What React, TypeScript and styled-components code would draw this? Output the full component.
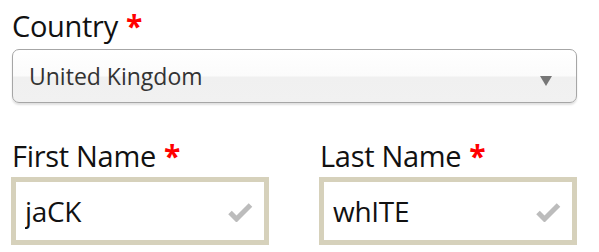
import React from "react";
import styled, { createGlobalStyle } from "styled-components";

const GlobalStyle = createGlobalStyle`
    html, body {
        margin: 0;
        padding: 0;
        background: #fff;
    }
    body {
        font-family: "Open Sans", "Noto Sans", sans-serif;
        color: #111;
    }
`;

const Form = styled.form`
    width: 566px;
    padding: 8px 0 0 11px;
`;

const Field = styled.div`
    display: flex;
    flex-direction: column;
`;

const Label = styled.label<{ $gap: number }>`
    display: block;
    font-size: 29px;
    line-height: 36px;
    padding-left: 1px;
    margin-bottom: ${p => p.$gap}px;
    color: #111;
    letter-spacing: -0.3px;
`;

const Required = styled.span`
    color: #f00;
    font-weight: 700;
    font-size: 30px;
    margin-left: 8px;
`;

const SelectWrap = styled.div`
    position: relative;
    margin-left: 1px;
`;

const Select = styled.select`
    appearance: none;
    -webkit-appearance: none;
    display: block;
    width: 565px;
    height: 54px;
    box-sizing: border-box;
    padding: 0 40px 0 16px;
    font-family: inherit;
    font-size: 23px;
    color: #333;
    border: 1.5px solid #a6a6a6;
    border-radius: 7px;
    background: linear-gradient(#ffffff 0%, #fbfbfb 50%, #f0f0f0 52%, #f1f1f1 100%);
    box-shadow: 0 2px 2px rgba(0, 0, 0, 0.12);
    outline: none;
`;

const Arrow = styled.span`
    position: absolute;
    right: 25px;
    top: 27px;
    width: 0;
    height: 0;
    border-left: 6px solid transparent;
    border-right: 6px solid transparent;
    border-top: 10px solid #777;
    pointer-events: none;
`;

const Row = styled.div`
    display: grid;
    grid-template-columns: 258px 258px;
    column-gap: 50px;
    margin-top: 35px;
`;

const InputWrap = styled.div`
    position: relative;
`;

const TextInput = styled.input`
    display: block;
    width: 258px;
    height: 68px;
    box-sizing: border-box;
    border: 5px solid #d6d1bb;
    padding: 0 48px 0 9px;
    font-family: inherit;
    font-size: 28px;
    color: #111;
    background: #fff;
    outline: none;
    border-radius: 0;
    letter-spacing: -0.3px;
`;

const CheckMark = styled.svg`
    position: absolute;
    right: 16px;
    top: 25px;
    width: 25px;
    height: 20px;
    pointer-events: none;
`;

function Check() {
    return <CheckMark viewBox="0 0 25 20">
        <path d="M2 10.5 L8.5 17 L22.5 3" fill="none" stroke="#bcbcbc" strokeWidth="5" strokeLinejoin="miter" strokeLinecap="butt" />
    </CheckMark>;
}

function NameField(prop: { label: string, value: string }) {
    return <Field>
        <Label $gap={3}>{prop.label}<Required>*</Required></Label>
        <InputWrap>
            <TextInput value={prop.value} readOnly />
            <Check />
        </InputWrap>
    </Field>;
}

export default function App() {
    return <>
        <GlobalStyle />
        <Form onSubmit={e => e.preventDefault()}>
            <Field>
                <Label $gap={5}>Country<Required>*</Required></Label>
                <SelectWrap>
                    <Select defaultValue="GB">
                        <option value="GB">United Kingdom</option>
                    </Select>
                    <Arrow />
                </SelectWrap>
            </Field>
            <Row>
                <NameField label="First Name" value="jaCK" />
                <NameField label="Last Name" value="whITE" />
            </Row>
        </Form>
    </>;
}
